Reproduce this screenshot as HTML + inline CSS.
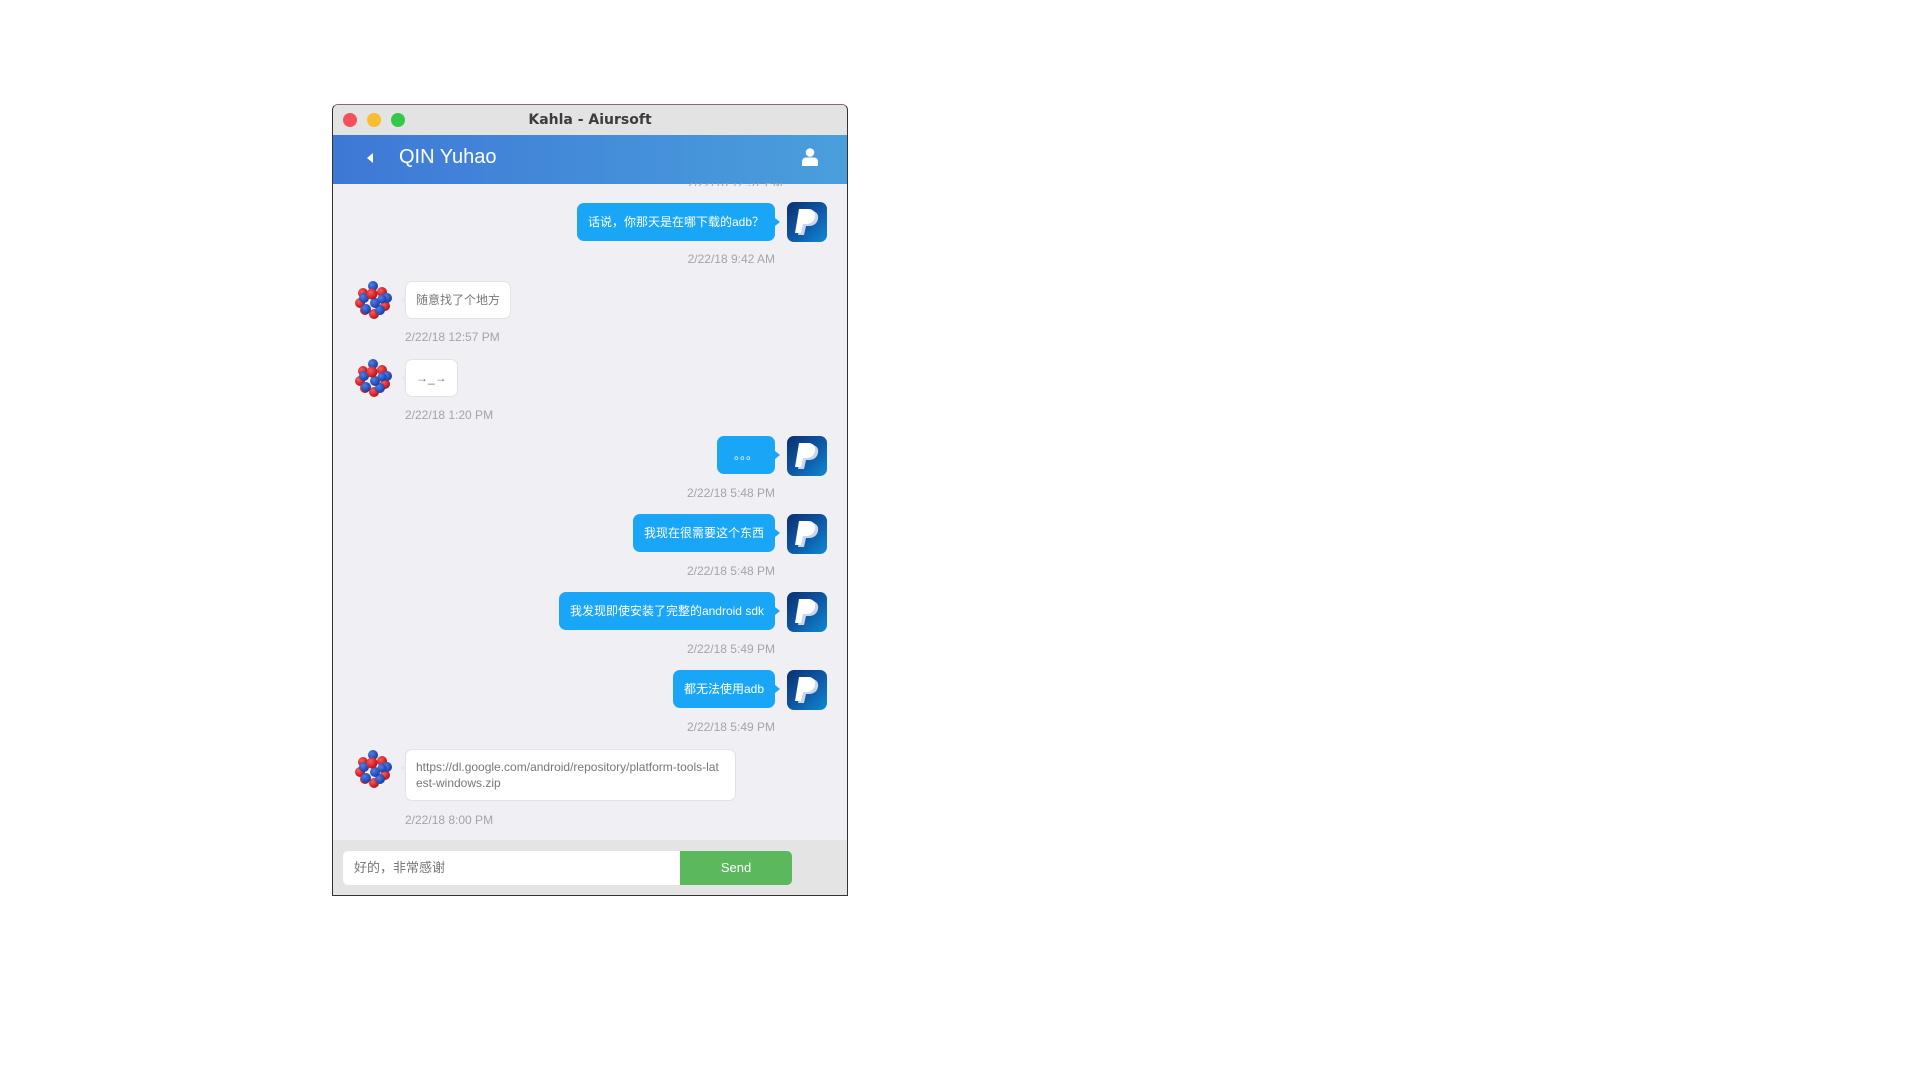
<!DOCTYPE html>
<html><head><meta charset="utf-8"><style>
*{margin:0;padding:0;box-sizing:border-box}
body{width:1920px;height:1080px;background:#fff;position:relative;overflow:hidden;font-family:"Liberation Sans","Noto Sans CJK SC",sans-serif}
.a{position:absolute}
.win{left:332px;top:104px;width:516px;height:792px;border:1px solid #333;border-top-color:#8a6a6a;border-radius:6px 6px 0 0;overflow:hidden;background:#efeff4}
.tb{left:0;top:0;width:100%;height:30px;background:#e3e3e3;text-align:center;font:bold 14px "DejaVu Sans",sans-serif;color:#3c3c3c;line-height:30px}
.dot{width:14px;height:14px;border-radius:50%;top:8px}
.hd{left:0;top:30px;width:100%;height:49px;background:linear-gradient(90deg,#3e78d6,#4a9fdc)}
.bo{background:#1aa6f7;color:#fff;font-size:12px;border-radius:7px;line-height:38px;padding:0 11px;white-space:nowrap}
.bo:after{content:"";position:absolute;right:-5px;top:15px;border:4px solid transparent;border-left:5px solid #1aa6f7;border-right:0}
.bi{background:#fff;color:#777;font-size:12px;border-radius:7px;border:1px solid #e2e2e6;padding:0 10px;line-height:36px;white-space:nowrap}
.bi:before{content:"";position:absolute;left:-5px;top:14px;border:4px solid transparent;border-right:5px solid #e8e8ec;border-left:0}
.ts{font-size:12px;color:#a5a5a8}
</style></head><body>
<div class="a win">
 <div class="a tb">Kahla - Aiursoft</div>
 <div class="a dot" style="left:10px;background:#f2505a"></div>
 <div class="a dot" style="left:34px;background:#f7bf2f"></div>
 <div class="a dot" style="left:58px;background:#34c84a"></div>
 <div class="a hd">
  <div class="a" style="left:34px;top:18px;width:0;height:0;border-top:5px solid transparent;border-bottom:5px solid transparent;border-right:6px solid #fff"></div>
  <div class="a" style="left:66px;top:11px;color:#fff;font-size:20px">QIN Yuhao</div>
  <svg class="a" style="left:469px;top:13px" width="16" height="18" viewBox="0 0 16 18"><circle cx="8" cy="4.5" r="4.3" fill="#fff"/><path d="M0 18v-4c0-3 2-4.5 4-4.5h8c2 0 4 1.5 4 4.5v4z" fill="#fff"/></svg>
 </div>
</div>
<div class="a ts" style="left:688px;top:183px;height:3px;overflow:hidden;line-height:0">2/22/18 12:57 PM</div>

<div class="a bo" style="right:1145px;top:203px">话说，你那天是在哪下载的adb？</div>
<div class="a ts" style="right:1145px;top:252px">2/22/18 9:42 AM</div>

<div class="a bi" style="left:405px;top:281px">随意找了个地方</div>
<div class="a ts" style="left:405px;top:330px">2/22/18 12:57 PM</div>
<div class="a bi" style="left:405px;top:359px">→_→</div>
<div class="a ts" style="left:405px;top:408px">2/22/18 1:20 PM</div>

<div class="a bo" style="right:1145px;top:436px;width:58px;padding:0;text-align:center;font-family:'Noto Sans CJK SC',sans-serif">。。。</div>
<div class="a ts" style="right:1145px;top:486px">2/22/18 5:48 PM</div>
<div class="a bo" style="right:1145px;top:514px">我现在很需要这个东西</div>
<div class="a ts" style="right:1145px;top:564px">2/22/18 5:48 PM</div>
<div class="a bo" style="right:1145px;top:592px">我发现即使安装了完整的android sdk</div>
<div class="a ts" style="right:1145px;top:642px">2/22/18 5:49 PM</div>
<div class="a bo" style="right:1145px;top:670px">都无法使用adb</div>
<div class="a ts" style="right:1145px;top:720px">2/22/18 5:49 PM</div>

<div class="a bi" style="left:405px;top:749px;width:331px;height:52px;white-space:normal;line-height:16px;padding:9px 10px;word-break:break-all">https://dl.google.com/android/repository/platform-tools-latest-windows.zip</div>
<div class="a ts" style="left:405px;top:813px">2/22/18 8:00 PM</div>

<svg width="0" height="0" style="position:absolute"><defs>
<linearGradient id="g" x1="0" y1="0" x2="1" y2="1"><stop offset="0" stop-color="#0a2f6e"/><stop offset=".55" stop-color="#0f5aa8"/><stop offset="1" stop-color="#0d8ad0"/></linearGradient>
<radialGradient id="r" cx=".35" cy=".35" r=".7"><stop offset="0" stop-color="#ff5a5a"/><stop offset="1" stop-color="#b50d12"/></radialGradient>
<radialGradient id="b" cx=".35" cy=".35" r=".7"><stop offset="0" stop-color="#4d7ef0"/><stop offset="1" stop-color="#1a3a9a"/></radialGradient>
<g id="pp"><rect width="40" height="40" rx="7" fill="url(#g)"/><path d="M15 9h9c5 0 8 3 7 8-1 5-5 7-9 7h-3l-2 9h-6z" fill="#c9d6ec"/><path d="M12 7h9c5 0 8 3 7 8-1 5-5 7-9 7h-3l-2 9h-6z" fill="#fff"/></g>
<g id="at">
<circle cx="8" cy="12" r="5" fill="url(#r)"/><circle cx="27" cy="11" r="5" fill="url(#r)"/><circle cx="5" cy="22" r="5" fill="url(#r)"/><circle cx="30" cy="25" r="5" fill="url(#r)"/><circle cx="19" cy="33" r="5" fill="url(#r)"/><circle cx="10" cy="29" r="5" fill="url(#r)"/>
<circle cx="18" cy="5" r="5" fill="url(#b)"/><circle cx="9" cy="17" r="5" fill="url(#b)"/><circle cx="32" cy="17" r="5" fill="url(#b)"/><circle cx="11" cy="28" r="5" fill="url(#b)"/><circle cx="25" cy="29" r="5" fill="url(#b)"/><circle cx="20" cy="22" r="5" fill="url(#b)"/><circle cx="27" cy="18" r="4.5" fill="url(#b)"/>
<circle cx="17" cy="13" r="5.5" fill="url(#r)"/></g>
</defs></svg>
<svg class="a" style="left:787px;top:202px" width="40" height="40"><use href="#pp"/></svg>
<svg class="a" style="left:787px;top:436px" width="40" height="40"><use href="#pp"/></svg>
<svg class="a" style="left:787px;top:514px" width="40" height="40"><use href="#pp"/></svg>
<svg class="a" style="left:787px;top:592px" width="40" height="40"><use href="#pp"/></svg>
<svg class="a" style="left:787px;top:670px" width="40" height="40"><use href="#pp"/></svg>
<svg class="a" style="left:355px;top:281px" width="38" height="38"><use href="#at"/></svg>
<svg class="a" style="left:355px;top:359px" width="38" height="38"><use href="#at"/></svg>
<svg class="a" style="left:355px;top:750px" width="38" height="38"><use href="#at"/></svg>
<div class="a" style="left:333px;top:840px;width:514px;height:55px;background:#e4e4e4"></div>
<div class="a" style="left:343px;top:851px;width:337px;height:34px;background:#fff;border-radius:5px 0 0 5px;font-size:13px;color:#777;line-height:34px;padding-left:11px">好的，非常感谢</div>
<div class="a" style="left:680px;top:851px;width:112px;height:34px;background:#5cb85c;border-radius:0 5px 5px 0;color:#fff;font-size:13px;line-height:34px;text-align:center">Send</div>
</body></html>
